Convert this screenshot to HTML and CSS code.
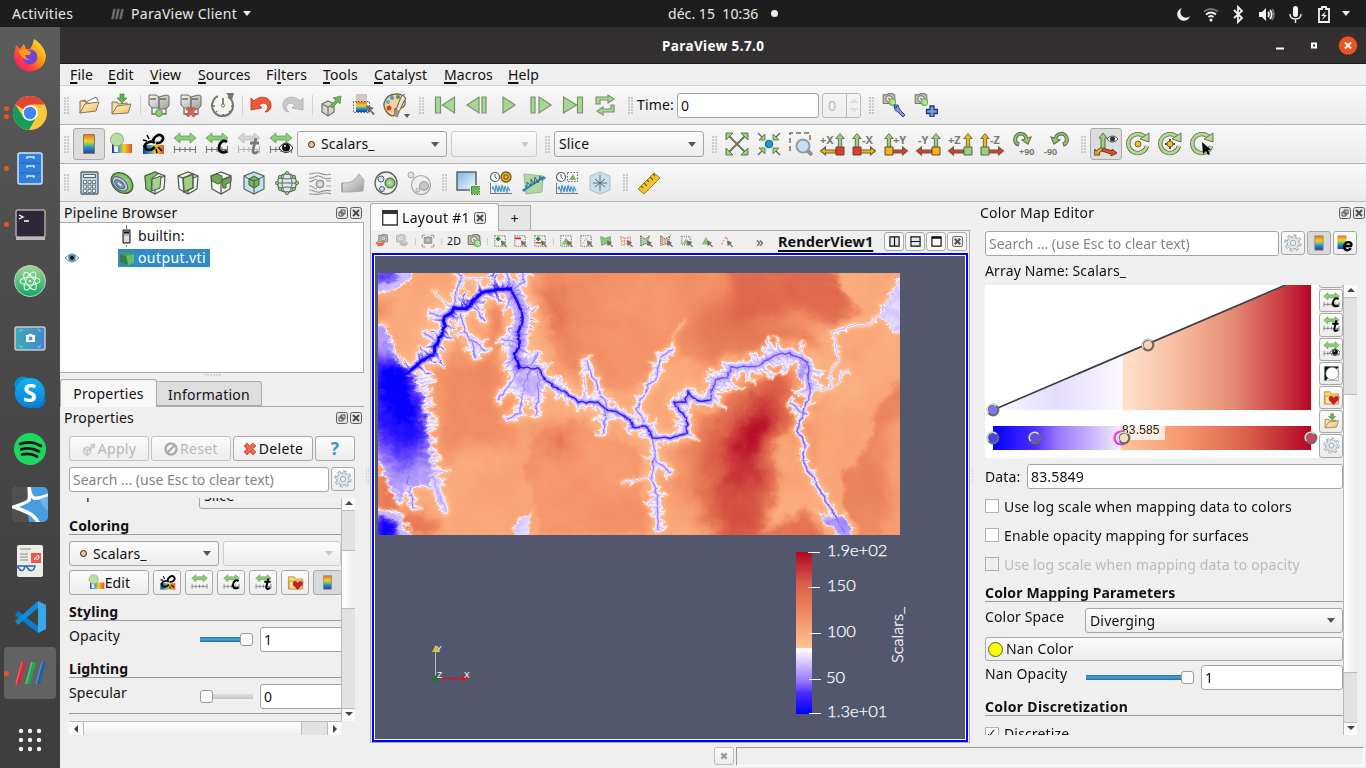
FILE: index.html
```html
<!DOCTYPE html>
<html lang="en">
<head>
<meta charset="utf-8">
<title>ParaView 5.7.0</title>
<link rel="stylesheet" href="styles.css">
</head>
<body>
<svg class="defs" width="0" height="0">
<defs>
<linearGradient id="rainbow" x1="0" y1="0" x2="0" y2="1"><stop offset="0" stop-color="#e2683c"/><stop offset=".15" stop-color="#f59a1c"/><stop offset=".35" stop-color="#f5cf20"/><stop offset=".5" stop-color="#8cc46c"/><stop offset=".65" stop-color="#2d9cc4"/><stop offset=".85" stop-color="#1c62b4"/><stop offset="1" stop-color="#3a3a94"/></linearGradient>
<linearGradient id="rainbowh"><stop offset="0" stop-color="#24388c"/><stop offset=".3" stop-color="#2a9ad0"/><stop offset=".6" stop-color="#f5cf20"/><stop offset="1" stop-color="#e2502c"/></linearGradient>
<linearGradient id="ylw" x1="0" y1="0" x2="1" y2="1"><stop offset="0" stop-color="#fff4cc"/><stop offset="1" stop-color="#f0be64"/></linearGradient>
<linearGradient id="blu" x1="0" y1="0" x2="1" y2="1"><stop offset="0" stop-color="#7db8e2"/><stop offset="1" stop-color="#f2f8fd"/></linearGradient>
<radialGradient id="grn"><stop offset="0" stop-color="#c8e8b0"/><stop offset="1" stop-color="#6fb457"/></radialGradient>
<linearGradient id="gry" x1="0" y1="0" x2="1" y2="1"><stop offset="0" stop-color="#f4f4f4"/><stop offset="1" stop-color="#9d9d9d"/></linearGradient>
<linearGradient id="ff" x1="1" y1="0" x2="0.1" y2="1"><stop offset="0" stop-color="#fff044"/><stop offset=".45" stop-color="#ff980e"/><stop offset=".75" stop-color="#ff3647"/><stop offset="1" stop-color="#e31587"/></linearGradient>
<linearGradient id="atm" x1="0" y1="0" x2="0" y2="1"><stop offset="0" stop-color="#a4d890"/><stop offset="1" stop-color="#10a768"/></linearGradient>
<linearGradient id="shot"><stop offset="0" stop-color="#3daab4"/><stop offset="1" stop-color="#4388d0"/></linearGradient>
<linearGradient id="sky" x1="0" y1="0" x2="0" y2="1"><stop offset="0" stop-color="#10b4f0"/><stop offset="1" stop-color="#0b7ed8"/></linearGradient>
<linearGradient id="opfill"><stop offset="0" stop-color="#fff"/><stop offset=".1" stop-color="#efeaff"/><stop offset=".2" stop-color="#e4dcfd"/><stop offset=".405" stop-color="#fbf8ff"/><stop offset=".41" stop-color="#ffe2cd"/><stop offset=".6" stop-color="#f6b797"/><stop offset=".75" stop-color="#e58d75"/><stop offset=".9" stop-color="#cb4143"/><stop offset="1" stop-color="#b40426"/></linearGradient>
<linearGradient id="barh"><stop offset="0" stop-color="#00f"/><stop offset=".13" stop-color="#4c2cff"/><stop offset=".2" stop-color="#9674f8"/><stop offset=".4" stop-color="#f3ecff"/><stop offset=".408" stop-color="#ffc397"/><stop offset=".6" stop-color="#f6976b"/><stop offset=".8" stop-color="#d9604a"/><stop offset="1" stop-color="#b40426"/></linearGradient>

<symbol id="folder" viewBox="0 0 24 24"><path d="M3 20 5 8l3-1 1 2 10-5 2 4" fill="#fff" stroke="#76765c"/><path d="M3 20V8h5l1 2h3" fill="#f6dfa8" stroke="#84755a"/><path d="m3 20 5-9 14-2-3 9z" fill="url(#ylw)" stroke="#84755a"/></symbol>
<symbol id="save" viewBox="0 0 24 24"><path d="M3 21V9h5l1 2 9-1 1 3" fill="#f6dfa8" stroke="#84755a"/><path d="m3 21 5-8 14-2-3 9z" fill="url(#ylw)" stroke="#84755a"/><path d="M11 1h4v4h3l-5 5-5-5h3z" fill="#62ae4c" stroke="#4f8b3b" stroke-width=".7"/></symbol>
<symbol id="srv" viewBox="0 0 24 24"><path d="m2 2 7 0 3 2v11H5l-3-3zM12 4l7-2 3 1v10l-3 3h-7z" fill="url(#gry)" stroke="#6e6e62"/><path d="M3 6h6M13 6h6M5 15v6h4M19 15v6h-4" fill="none" stroke="#6e6e62" stroke-width="1.3"/></symbol>
<symbol id="connect" viewBox="0 0 24 24"><use href="#srv"/><circle cx="12" cy="20" r="3.500" fill="#8bcf72" stroke="#5e9450"/></symbol>
<symbol id="disconnect" viewBox="0 0 24 24"><use href="#srv"/><path d="m8 15 8 8M16 15l-8 8" stroke="#9d4235" stroke-width="3.6"/><path d="m8 15 8 8M16 15l-8 8" stroke="#e06655" stroke-width="2.2"/></symbol>
<symbol id="clock" viewBox="0 0 24 24"><path d="M17 3.700A10.500 10.500 0 1 1 7 3.200" fill="#f5f5f0" stroke="#73736a" stroke-width="2"/><path d="m15 0 8 0-2 7z" fill="#73736a"/><path d="M12 12V5M2 13h2M20 13h2M12 21v2M5 19l1-1M19 19l-1-1" stroke="#73736a" stroke-width="1.7"/><circle cx="12" cy="12.500" r="1.600" fill="#fff" stroke="#73736a"/></symbol>
<symbol id="undo" viewBox="0 0 24 24"><path d="m2 5 3 3c6-7 18-4 17 5-.3 4-3 6-6 6 6-5 1-12-6-7l3 3-11 2z" fill="#ee5834" stroke="#a8402b" stroke-width=".8"/></symbol>
<symbol id="redo" viewBox="0 0 24 24"><path d="m22 5-3 3C13 1 1 4 2 13c.3 4 3 6 6 6-6-5-1-12 6-7l-3 3 11 2z" fill="#c9c9c9" stroke="#aaa" stroke-width=".8"/></symbol>
<symbol id="extract" viewBox="0 0 24 24"><path d="m3 11 6-3 6 3v8l-6 4-6-4z" fill="#d6d6cf" stroke="#76766a" stroke-width="1.300"/><path d="m3 11 6 3 6-3M9 14v9" fill="none" stroke="#76766a" stroke-width="1.200"/><path d="m11 13 6-6-3-2 8-2-1 8-2-2-6 6z" fill="#6db75a" stroke="#598c4a" stroke-width=".8"/></symbol>
<symbol id="pickmap" viewBox="0 0 24 24"><path d="M5 1h11v8H5z" fill="#d6c4bd"/><path d="M5 9h11v10H5z" fill="url(#rainbow)"/><path d="M2.500 8.500v11h16v-11z" fill="none" stroke="#555" stroke-dasharray="1.500 1.500"/><path d="m15 12 2 8 2-2 3 4 2-1-4-4 3-2z" fill="#6b6b61"/></symbol>
<symbol id="palette" viewBox="0 0 24 24"><path d="M12 1C3 2-2 11 3 18s11 6 9 0 9 1 10-7S18 0 12 1z" fill="#f4d29c" stroke="#66604c" stroke-width="1.3"/><circle cx="9" cy="5" r="2" fill="#4a9bcd"/><circle cx="15" cy="4" r="2" fill="#5c9244"/><circle cx="5" cy="9" r="2" fill="#45b1d7"/><circle cx="6" cy="15" r="2.500" fill="#d94226"/><path d="m21 1-3 3-7 18 3 2 6-14 3-5-2-1z" fill="#e6e3d5" stroke="#625e51"/><path d="m13 16-2 6 3 2 3-6z" fill="#a7957a"/></symbol>
<symbol id="first" viewBox="0 0 24 24"><path d="M2.500 4h5v16h-5zM21.500 4v16l-12-8z"/></symbol>
<symbol id="prev" viewBox="0 0 24 24"><path d="M17 4h4v16h-4zM14 4v16L2 12z"/></symbol>
<symbol id="play" viewBox="0 0 24 24"><path d="m6 4 12 8-12 8z"/></symbol>
<symbol id="next" viewBox="0 0 24 24"><path d="M2 4h4v16H2zM10 4l12 8-12 8z"/></symbol>
<symbol id="last" viewBox="0 0 24 24"><path d="m2.500 4 13 8-13 8zM16.500 4h5v16h-5z"/></symbol>
<symbol id="loop" viewBox="0 0 24 24"><path d="M3 11V4h12V2l6 4-6 4V7H7v4zM21 12v7H10v3l-6-4 6-4v2h8v-4z"/></symbol>
<symbol id="cam" viewBox="0 0 24 24"><path d="M2 3h8v-2h9v2h3v15H2z" fill="#bdbdb1" stroke="#66665a" stroke-width="1.5"/><circle cx="12" cy="10" r="5.500" fill="#e9e9e4" stroke="#66665a" stroke-width="1.500"/><circle cx="12" cy="10" r="2" fill="#98988c"/></symbol>
<symbol id="camgreen" viewBox="0 0 24 24"><use href="#cam"/><circle cx="18" cy="16" r="6" fill="#83ca62" stroke="#579c3f"/><circle cx="18" cy="15" r="2.500" fill="none" stroke="#fff" stroke-width="1.500"/><path d="m20 17 2 3" stroke="#fff" stroke-width="1.500"/></symbol>
<symbol id="camwrench" viewBox="0 0 24 24"><svg x="0" y="0" width="14" height="14"><use href="#camgreen"/></svg><path d="m12 12 4 0 1 3 2 3 4 4-2 2-5-5-3-2-1-4 2 2 1-1z" fill="#7d98d8" stroke="#253c86" stroke-width=".9"/></symbol>
<symbol id="camplus" viewBox="0 0 24 24"><svg x="0" y="0" width="14" height="14"><use href="#camgreen"/></svg><path d="M16 13h4v3.500h3.500v4H20V24h-4v-3.500h-3.500v-4H16z" fill="#7399e0" stroke="#22367c" stroke-width="1.300"/></symbol>

<symbol id="bar" viewBox="0 0 24 24"><path d="M6.500 2.500h11v19h-11z" fill="url(#rainbow)" stroke="#8a7a68"/></symbol>
<symbol id="editmap" viewBox="0 0 24 24"><path d="M3 12h20v9H3z" fill="url(#rainbowh)"/><path d="M5 11h4v9H5z" fill="#eee"/><circle cx="8" cy="7.500" r="6.500" fill="#b9dda5" stroke="#8db37f"/></symbol>
<symbol id="sepmap" viewBox="0 0 24 24"><path d="M2 13h21v9H2z" fill="url(#rainbowh)"/><path d="M14 11c-4-3-11 0-10 4s6 4 10 0M12 10c0-5 6-9 9-6s-1 8-6 7" fill="none" stroke="#050505" stroke-width="2.700"/><path d="m6 3 2 4M2 8l4 1M17 15l4 4M15 17l1 4" fill="none" stroke="#050505" stroke-width="1.500"/></symbol>
<symbol id="arr" viewBox="0 0 24 24"><path d="m1 6 6-5v3h10V1l6 5-6 5V8H7v3z" fill="#8cce74" stroke="#5a8d4e" stroke-width=".7"/></symbol>
<symbol id="ticks" viewBox="0 0 24 24"><path d="M1.500 14v7M1 17.500h22M6.800 15v5M12 15v5M17 15v5M22.500 14v7" stroke="#77776d" stroke-width="1.100"/></symbol>
<symbol id="resc" viewBox="0 0 24 24"><use href="#arr"/><use href="#ticks"/></symbol>
<symbol id="rescc" viewBox="0 0 24 24"><use href="#arr"/><use href="#ticks"/><path d="M22 10c-4-3-8 1-8 6s5 5 8 3" fill="none" stroke="#050505" stroke-width="2.800"/></symbol>
<symbol id="resct" viewBox="0 0 24 24"><use href="#arr"/><use href="#ticks"/><path d="m19 6-3 12c-.5 4 3 4 5 1M13 11h9" fill="none" stroke="#050505" stroke-width="2.800"/></symbol>
<symbol id="rescv" viewBox="0 0 24 24"><use href="#arr"/><use href="#ticks"/><path d="M10 16c5-7 10-6 14 0-4 6-10 6-14 0" fill="#efefef" stroke="#222"/><circle cx="17" cy="15.500" r="4" fill="#111"/><circle cx="16" cy="14" r="1" fill="#fff"/></symbol>
<symbol id="reset" viewBox="0 0 24 24"><path d="m3 3 18 18M21 3 3 21" stroke="#6d7159" stroke-width="1.800"/><path d="M1 1h7L1 8zM23 1h-7l7 7zM1 23h7l-7-7zM23 23h-7l7-7z" fill="#9bd083" stroke="#5b784c"/></symbol>
<symbol id="zoomdata" viewBox="0 0 24 24"><path d="m1 1 6 6M23 1l-6 6M1 23l6-6M23 23l-6-6" stroke="#686d58" stroke-width="1.500"/><path d="M2 8h6V2zM22 8h-6V2zM2 16h6v6zM22 16h-6v6z" fill="#9bd083" stroke="#5b784c" stroke-width=".9"/><circle cx="12" cy="12" r="3.800" fill="#2293cf" stroke="#176187"/></symbol>
<symbol id="zoombox" viewBox="0 0 24 24"><path d="M1 19V1h20v8" fill="none" stroke="#70705f" stroke-width="1.500" stroke-dasharray="5 3"/><path d="m18 18 5 5" stroke="#939393" stroke-width="4"/><circle cx="14" cy="14" r="6.500" fill="#c4e0f3" stroke="#989898" stroke-width="2"/></symbol>
<symbol id="au" viewBox="0 0 12 20"><path d="m6 1 5 6H8v12H4V7H1z" stroke="#6a7050" stroke-width="1.200"/></symbol>
<symbol id="sl" viewBox="0 0 17 10"><path d="m1 5 5-4v3h10v3H6v2z" stroke="#685b3c" stroke-width="1.100"/></symbol>
<symbol id="rotp" viewBox="0 0 24 24"><path d="M9 18a7 7 0 1 1 9.500-8l3.500-1-3 7-6-4 3-1A4.200 4.200 0 1 0 10 15z" fill="#93cc7e" stroke="#65794d" stroke-width="1.200"/></symbol>
<symbol id="axes" viewBox="0 0 24 24"><path d="m8 15-6 4-1-2-1 6 6 0-1-2 6-4z" fill="#e4a331" stroke="#714e28"/><path d="m9 16 9 3 0-2 5 4-6 3v-2l-9-3z" fill="#db4d31" stroke="#763527"/><path d="m9 1 4 5h-2v10H7V6H5z" fill="#9bd083" stroke="#527044"/><path d="M13 7c3-4 8-4 11 0-3 4-8 4-11 0" fill="#efefef" stroke="#555"/><circle cx="18.500" cy="7" r="2.500" fill="#333"/></symbol>
<symbol id="rot" viewBox="0 0 24 24"><path d="M19.500 6A9.500 9.500 0 1 0 21 14" fill="none" stroke="#68725a" stroke-width="4.400"/><path d="M19.500 6A9.500 9.500 0 1 0 21 14" fill="none" stroke="#b5da8b" stroke-width="2.600"/><path d="m14 7 9 3V1z" fill="#b5da8b" stroke="#68725a"/></symbol>
<symbol id="rc1" viewBox="0 0 24 24"><use href="#rot"/><circle cx="12" cy="12" r="3" fill="#eec122" stroke="#73632d"/></symbol>
<symbol id="rc2" viewBox="0 0 24 24"><use href="#rot"/><path d="M12 7v10M7 12h10" stroke="#4b4b3b" stroke-width="2"/><circle cx="12" cy="12" r="3" fill="#eec122" stroke="#73632d"/></symbol>
<symbol id="rc3" viewBox="0 0 24 24"><use href="#rot"/><path d="m12 10 1 12 3-3 2 4 2-1-2-4h3z" fill="#070707"/></symbol>

<symbol id="calc" viewBox="0 0 24 24"><rect x="4" y="1" width="17" height="22" rx="1" fill="#bcd7ea" stroke="#53626b" stroke-width="1.300"/><path d="M6.500 3.500h12v3h-12z" fill="#eee" stroke="#53626b"/><path d="M6.500 9.500h3v3h-3zM11 9.500h3v3h-3zM15.500 9.500h3v3h-3zM6.500 14h3v3h-3zM11 14h3v3h-3zM15.500 14h3v3h-3zM6.500 18.500h3v3h-3zM11 18.500h3v3h-3zM15.500 18.500h3v3h-3z" fill="#fff" stroke="#60707a" stroke-width=".9"/></symbol>
<symbol id="contour" viewBox="0 0 24 24"><g transform="rotate(40 12 12)"><ellipse cx="12" cy="12" rx="12" ry="9" fill="url(#grn)" stroke="#48623b" stroke-width="1.300"/><ellipse cx="11" cy="14" rx="9" ry="5.500" fill="#b9cfe0" stroke="#4e6074"/><ellipse cx="11" cy="14.500" rx="6" ry="3" fill="#7394b5" stroke="#42566b"/><ellipse cx="11" cy="14.500" rx="2.500" ry="1" fill="#dbe8f0"/></g></symbol>
<symbol id="cube" viewBox="0 0 24 24"><path d="m12 1 10 4-1 13-9 5-9-5L2 5z" fill="#f2f2f0"/><path d="m2 5 10 4 10-4M12 9v14M12 1 2 5l1 13 9 5 9-5 1-13z" fill="none" stroke="#4c5745" stroke-width="1.200"/></symbol>
<symbol id="clip" viewBox="0 0 24 24"><use href="#cube"/><path d="m2 5 10-4 3 2-6 4-1 14-5-3z" fill="#85bd71" stroke="#45603a"/><path d="m9 8 9-3-1 12-8 3z" fill="#a5d291" stroke="#45603a"/></symbol>
<symbol id="slice" viewBox="0 0 24 24"><use href="#cube"/><path d="m7 7 10-4v14L8 21z" fill="#9ece88" stroke="#45603a" stroke-width="1.500"/></symbol>
<symbol id="thresh" viewBox="0 0 24 24"><use href="#cube"/><path d="m2 5 6-2 5 2v6l-4 2-6-3zM13 9l9-3v5l-5 2v4h-3z" fill="#6ca957" stroke="#45603a"/></symbol>
<symbol id="subset" viewBox="0 0 24 24"><path d="m12 1 10 4v13l-10 5-10-5V5z" fill="#c8e1ee" stroke="#53646b" stroke-width="1.200"/><path d="m7 8 5-3 5 3v6l-5 3-5-3z" fill="#78b463" stroke="#3e6133"/><path d="m7 8 5 2 5-2M12 10v7l0 6M2 5l5 3M22 5l-5 3" fill="none" stroke="#3f5b3a"/></symbol>
<symbol id="glyph" viewBox="0 0 24 24"><circle cx="12" cy="12" r="9.500" fill="#d9e9f1" stroke="#4e5c5a" stroke-width="1.200"/><ellipse cx="12" cy="12" rx="5" ry="10" fill="none" stroke="#5a6960"/><path d="M1 12h22M4 6q8 4 16 0M4 18q8-4 16 0" fill="none" stroke="#5a6960"/><g fill="#8fc37a" stroke="#456337" stroke-width=".7"><circle cx="12" cy="2" r="1.700"/><circle cx="12" cy="22" r="1.700"/><circle cx="2" cy="12" r="1.700"/><circle cx="22" cy="12" r="1.700"/><circle cx="5" cy="6" r="1.700"/><circle cx="19" cy="6" r="1.700"/><circle cx="5" cy="18" r="1.700"/><circle cx="19" cy="18" r="1.700"/></g></symbol>
<symbol id="stream" viewBox="0 0 24 24"><path d="M1 3c5 0 7-2 10-1s7 3 12 1M1 7c5 1 6-3 10-2s6 4 12 2M1 11c4 0 4-3 8-3M1 15c3-1 5 3 8 3M18 10h5M18 15h5M1 19c5 0 7 3 11 2s7-3 11-1M1 23c5 0 7 1 11 0s7-2 11 0" fill="none" stroke="#969696" stroke-width="1.200"/><circle cx="12" cy="13" r="4" fill="#c9c9c9" stroke="#898989"/><circle cx="12" cy="13" r="1.500" fill="#f0f0f0"/></symbol>
<symbol id="warp" viewBox="0 0 24 24"><path d="M1 12q12 1 17-9l5 6-1 11q-10 1-21 1z" fill="url(#gry)" stroke="#aaa"/><path d="M1 12v9" stroke="#888"/></symbol>
<symbol id="group" viewBox="0 0 24 24"><circle cx="12" cy="12" r="11" fill="#eef0ee" stroke="#5c6454" stroke-width="1.300"/><circle cx="7" cy="8" r="3" fill="#d3e0e7" stroke="#50636e"/><circle cx="16" cy="12" r="5" fill="url(#grn)" stroke="#45603a"/><circle cx="8" cy="18" r="2.500" fill="#c9dce6" stroke="#50636e"/></symbol>
<symbol id="extlvl" viewBox="0 0 24 24"><circle cx="14" cy="14" r="9.500" fill="#efefef" stroke="#a9a9a9" stroke-width="1.200"/><circle cx="4" cy="4" r="3" fill="#e0e0e0" stroke="#a9a9a9"/><circle cx="17" cy="15" r="4.500" fill="#c4c4c4" stroke="#999"/><circle cx="11" cy="19" r="2" fill="#ddd" stroke="#aaa"/></symbol>
<symbol id="selx" viewBox="0 0 24 24"><path d="M1 1h19v18H1z" fill="url(#blu)" stroke="#56666f" stroke-width="1.500"/><path d="M14.500 14.500h9v9h-9z" fill="#6aba51" stroke="#f2f2f2"/><path d="M15.500 15.500h8v8h-8z" fill="none" stroke="#397a2b" stroke-dasharray="1.500 1"/></symbol>
<symbol id="wave" viewBox="0 0 24 24"><path d="M1.500 12v10.500H23" fill="none" stroke="#777"/><path d="m3 18 1-2 2 5 1-7 2 7 1-6 2 6 1-7 2 7 1-6 2 6 1-5 2 4" fill="none" stroke="#4695d2" stroke-width="1.200"/></symbol>
<symbol id="pltime" viewBox="0 0 24 24"><use href="#wave"/><circle cx="6" cy="6" r="4.500" fill="#fff" stroke="#54645f" stroke-width="1.200"/><path d="M6 3v3l2 2" fill="none" stroke="#555"/><circle cx="17" cy="6" r="5" fill="#eab52d" stroke="#70571d" stroke-width="1.300"/><path d="M15 4h4v4h-4z" fill="none" stroke="#70571d"/></symbol>
<symbol id="plline" viewBox="0 0 24 24"><path d="m2 3 19 2-1 16-16 2z" fill="#b1d6a2" stroke="#97b78c"/><path d="m2 19 20-13" stroke="#1477ae" stroke-width="1.500"/><path d="m3 15 2 1 0-5 4 4 0-7 3 5 1-7 3 6 2-7 3 5" fill="none" stroke="#356685"/><circle cx="2" cy="19" r="1.600" fill="#1e86c3"/><circle cx="22" cy="7" r="1.600" fill="#1e86c3"/></symbol>
<symbol id="plsel" viewBox="0 0 24 24"><use href="#wave"/><circle cx="6" cy="6" r="4.500" fill="#fff" stroke="#54645f" stroke-width="1.200"/><path d="M6 3v3l2 2" fill="none" stroke="#555"/><path d="M12.500 1.500h10v9h-10z" fill="none" stroke="#59645f" stroke-dasharray="1.500 1.500"/><path d="m14 9 4-6 3 6z" fill="#70b55c"/></symbol>
<symbol id="freeze" viewBox="0 0 24 24"><path d="m12 1 10 4v14l-10 4-10-4V5z" fill="#cadce8" stroke="#aebec8"/><path d="M12 4v16M5 12h14M7 8l10 8M17 8 7 16" stroke="#547083" stroke-width="1"/></symbol>
<symbol id="ruler" viewBox="0 0 24 24"><path d="m1 18 16-16 6 5L7 23z" fill="#f1c62b" stroke="#a67c25"/><path d="m4 15 2 2M7 12l3 3M10 9l2 2M13 6l3 3M16 3l2 2" stroke="#765820" stroke-width="1.200"/></symbol>

<symbol id="gear" viewBox="0 0 24 24"><circle cx="12" cy="12" r="9.300" fill="none" stroke="#7b8894" stroke-width="4" stroke-dasharray="3.700 3.600"/><circle cx="12" cy="12" r="8.200" fill="#e0e7ec" stroke="#7b8894"/><circle cx="12" cy="12" r="9" fill="none" stroke="#e0e7ec" stroke-width="3" stroke-dasharray="3 4.070"/><circle cx="12" cy="12" r="3.500" fill="#fff" stroke="#7b8894"/></symbol>
<symbol id="heart" viewBox="0 0 24 24"><path d="M2 21V4h8l2 3h10v14z" fill="#f8d869" stroke="#b67f29"/><path d="m3 10 20 0-2 11H3z" fill="#fbe99f" stroke="#b67f29"/><path d="m15 22-6-6c-2-7 4-7 6-3 3-4 9-3 6 3z" fill="#ca1b22" stroke="#8f1118" stroke-width=".7"/></symbol>
<symbol id="ebar" viewBox="0 0 24 24"><path d="M2 2h12v18H2z" fill="url(#rainbow)"/><path d="M11 16h9c3-5-6-8-9-1-2 6 4 9 9 4" fill="none" stroke="#050505" stroke-width="3.200"/></symbol>
<symbol id="invert" viewBox="0 0 24 24"><path d="M2 2h20v20H2z" fill="#111"/><path d="M22 3v19H4z" fill="#fff"/><circle cx="13" cy="12" r="9" fill="#fff" stroke="#777"/></symbol>
<symbol id="flt" viewBox="0 0 12 12"><rect x=".5" y=".5" width="11" height="11" rx="2" fill="#e7e7e7" stroke="#5c5c5c"/><path d="M5 3h4v4H5zM3 5h4v4H3z" fill="#e7e7e7" stroke="#4d4d4d"/></symbol>
<symbol id="cls" viewBox="0 0 12 12"><rect x=".5" y=".5" width="11" height="11" rx="2" fill="#e7e7e7" stroke="#5c5c5c"/><path d="m3 3 6 6M9 3 3 9" stroke="#4d4d4d" stroke-width="2"/></symbol>
<symbol id="knob" viewBox="-8 -8 16 16"><circle r="5.300" fill="rgba(255,255,255,.2)" stroke="#6b6b60" stroke-width="2.200"/><path d="M-4.500 3A5.300 5.300 0 0 1 3.500-4" fill="none" stroke="#d8d8cc" stroke-width="1.600"/></symbol>

<symbol id="selcur" viewBox="0 0 16 16"><path d="m9 7 1 7 2-2 3 3 1-1-3-3 2-1z" fill="#6f6e62"/></symbol>
<symbol id="dash" viewBox="0 0 16 16"><path d="M2 2h12v12H2z" fill="none" stroke="#555b50" stroke-dasharray="1.300 1.300"/></symbol>
<symbol id="selA" viewBox="0 0 16 16"><use href="#dash"/><path d="M6 3v5M3.500 5.500h5" stroke="#238431" stroke-width="2"/><use href="#selcur"/></symbol>
<symbol id="selB" viewBox="0 0 16 16"><use href="#dash"/><path d="M2 5h7" stroke="#e31e1e" stroke-width="2"/><use href="#selcur"/></symbol>
<symbol id="selC" viewBox="0 0 16 16"><use href="#dash"/><path d="M6 3v5M3.500 5.500h5" stroke="#238431" stroke-width="2"/><path d="M3 10h6" stroke="#e31e1e" stroke-width="1.500"/><use href="#selcur"/></symbol>
<symbol id="selD" viewBox="0 0 16 16"><use href="#dash"/><path d="m3 12 5-8 5 8z" fill="#88bf70"/><use href="#selcur"/></symbol>
<symbol id="selE" viewBox="0 0 16 16"><use href="#dash"/><path d="m4 11 4-6 4 6" fill="none" stroke="#ee7a5e" stroke-dasharray="2 1.500"/><use href="#selcur"/></symbol>
<symbol id="selF" viewBox="0 0 16 16"><path d="m2 3 5 2 6-2v9l-5-1-5 2z" fill="#8ec47b" stroke="#7d9b6d"/><use href="#selcur"/></symbol>
<symbol id="selG" viewBox="0 0 16 16"><path d="m2 3 5 2 6-2v9l-5-1-5 2zM6 4v9M10 4v8M3 8h11" fill="none" stroke="#e6614b" stroke-dasharray="1.500 1"/><use href="#selcur"/></symbol>
<symbol id="selH" viewBox="0 0 16 16"><path d="m2 2 5 4 5-4-2 5 3 6-6-2-5 3z" fill="#b3caa8" stroke="#333f2c" stroke-dasharray="1.500 1"/><use href="#selcur"/></symbol>
<symbol id="selI" viewBox="0 0 16 16"><path d="m2 2 5 4 6-4-2 5 3 6-6-2-6 2z" fill="#eccdc0" stroke="#353535" stroke-dasharray="1.500 1"/><path d="M4 5v6M7 6v5M10 6v5" stroke="#ee5c44" stroke-dasharray="1.500 1"/><use href="#selcur"/></symbol>
<symbol id="selJ" viewBox="0 0 16 16"><path d="M3 3h10v9H3z" fill="none" stroke="#7d817b" stroke-width="2" stroke-dasharray="1 1.500"/><path d="m4 11 4-6 4 6z" fill="#9cb78f"/><use href="#selcur"/></symbol>
<symbol id="selK" viewBox="0 0 16 16"><path d="m3 12 5-9 5 9z" fill="#8ac374"/><use href="#selcur"/></symbol>
<symbol id="selL" viewBox="0 0 16 16"><path d="m3 12 5-9 5 9" fill="none" stroke="#ee7256" stroke-width="1.300" stroke-dasharray="2 2"/><use href="#selcur"/></symbol>
</defs>
</svg>

<header class="topbar">
  <span class="activities">Activities</span>
  <svg class="pvmini" viewBox="0 0 14 12"><path d="M3 1h2L3 11H1zM7 1h2L7 11H5zM11 1h2l-2 10H9z" fill="#7c7c7c" stroke="#555" stroke-width=".7"/></svg>
  <span class="appname">ParaView Client</span><i class="caret light"></i>
  <span class="clocktxt">déc. 15&nbsp; 10:36</span><i class="dot"></i>
  <svg class="tray" viewBox="0 0 172 20" fill="none" stroke="#f2f2f2" stroke-width="1.800">
    <path d="M10 4a6.500 6.500 0 1 0 8 8 5.500 5.500 0 0 1-8-8z" fill="#f2f2f2" stroke="none"/>
    <path d="M32 7.500q7-5 14 0" stroke="#777"/><path d="M34 10.500q5-4 10 0M36.500 13q2.500-2 5 0"/><circle cx="39" cy="16" r="1.500" fill="#f2f2f2" stroke="none"/>
    <path d="m62 6 8 8-4 4V3l4 4-8 7"/>
    <path d="M87 8h3l4-4v13l-4-4h-3z" fill="#f2f2f2" stroke="none"/><path d="M96 8q2 2 0 5M98 6q3.500 4 0 9"/><path d="M100 5q4 5 0 11" stroke="#777"/>
    <rect x="121" y="2" width="5" height="11" rx="2.500" fill="#f2f2f2" stroke="none"/><path d="M118 10q0 5 5.500 5t5.500-5M123.500 15v4" stroke-width="1.400"/>
    <path d="M147 5h3V3h4v2h3v13h-10z"/><path d="m154 7-5 5h3l-2 4 5-5h-3z" fill="#f2f2f2" stroke="none"/>
  </svg><i class="caret light last"></i>
</header>

<div class="shell">
<nav class="dock">
  <div class="app"><svg viewBox="0 0 36 36"><path d="M22 1c6 4 11 9 12 17A16 16 0 1 1 3 12l1-5 4 4 4-5 2 5 4 0q3-4 4-10z" fill="url(#ff)"/><circle cx="18" cy="19" r="7.500" fill="#7542d8"/><path d="M7 13q5-4 12 1l-1 3h-5q1 4 5 5-8 1-11-9z" fill="#ff9a1c"/></svg></div>
  <div class="app"><b class="run two"></b><svg viewBox="0 0 36 36"><circle cx="18" cy="19" r="17" fill="#fbc93a"/><path d="M18 19 3.300 10.500A17 17 0 0 1 32.700 10.500H18z" fill="#e24436"/><path d="M3.300 10.500A17 17 0 0 0 17 36l7.500-13-13 0z" fill="#169c59"/><circle cx="18" cy="19" r="7.800" fill="#fff"/><circle cx="18" cy="19" r="6.200" fill="#4285f4"/></svg></div>
  <div class="app"><b class="run"></b><svg viewBox="0 0 36 36"><rect x="6" y="3" width="24" height="31" rx="2" fill="#2f80de" stroke="#d5e4f4" stroke-width="1.500"/><path d="M7 13h22M7 23h22" stroke="#1f63b8"/><path d="M15 9V7h7v2M15 18v-2h7v2M15 28v-2h7v2" fill="none" stroke="#dce8f6" stroke-width="1.300"/></svg></div>
  <div class="app"><b class="run"></b><svg viewBox="0 0 36 36"><rect x="4" y="4" width="29" height="27" rx="2" fill="#2d2738" stroke="#aaa9a6" stroke-width="1.500"/><path d="M4 31h29v3H4z" fill="#bbb"/><path d="m7 9 4 2-4 2M12 15h5" fill="none" stroke="#fff" stroke-width="1.300"/></svg></div>
  <div class="app"><svg viewBox="0 0 36 36"><circle cx="18" cy="19" r="15.500" fill="url(#atm)" stroke="#c6ccc7"/><g fill="none" stroke="#e8fff2" stroke-width="1"><ellipse cx="18" cy="19" rx="4" ry="10" transform="rotate(28 18 19)"/><ellipse cx="18" cy="19" rx="4" ry="10" transform="rotate(-32 18 19)"/><ellipse cx="18" cy="19" rx="4" ry="10" transform="rotate(88 18 19)"/></g><circle cx="18" cy="19" r="1.300" fill="#fff"/></svg></div>
  <div class="app"><svg viewBox="0 0 36 36"><rect x="3" y="9" width="30" height="23" rx="2" fill="url(#shot)" stroke="#cbc7cc" stroke-width="1.500"/><path d="m8 14 0-2h3M25 12h3v2M8 27v2h3M25 29h3v-2" fill="none" stroke="#8bc4df"/><path d="M14 17h2l1-1h3l1 1h2v7h-9z" fill="#fff"/><circle cx="18.500" cy="20.500" r="2" fill="#4a98cc"/></svg></div>
  <div class="app"><svg viewBox="0 0 36 36"><circle cx="11" cy="11" r="8.500" fill="#078fcf"/><circle cx="25" cy="26" r="8.500" fill="#0878c8"/><circle cx="18" cy="19" r="15" fill="url(#sky)"/></svg><em>S</em></div>
  <div class="app"><svg viewBox="0 0 36 36"><circle cx="18" cy="19" r="16" fill="#1ed760"/><path d="M8 14q11-4 21 2M9 19.500q9-3 18 2M10 24.500q8-2 15 2" fill="none" stroke="#181818" stroke-width="2.700" stroke-linecap="round"/></svg></div>
  <div class="app"><svg viewBox="0 0 36 36"><defs><clipPath id="rnd"><rect y="1" width="36" height="35" rx="5"/></clipPath></defs><g clip-path="url(#rnd)"><path d="M0 0h36v36H0z" fill="#479de0"/><path d="M0 0h17l4 12L2 21l14 8 1 7H0z" fill="#505050"/><path d="M17-1q1 12 5 13t15-3M17 0q1 12 0 14T2 21q14 5 18 8t7 9" fill="none" stroke="#fff" stroke-width="3.500"/><path d="M28 13q2 8 9 13v-16z" fill="#6ab3ea"/></g></svg></div>
  <div class="app"><svg viewBox="0 0 36 36"><rect x="5" y="3" width="26" height="32" rx="2" fill="#ececea"/><path d="M8 7h11M8 12h8M8 15h8M8 18h8" stroke="#aaa" stroke-width="1.300"/><rect x="19" y="11" width="10" height="10" fill="#ef5749"/><path d="M22 18q5-7 5-3t-5 1" stroke="#fff" fill="none"/><path d="M5 24h8q-1 6-5 4zM14 24h9q-1 6-6 4z" fill="none" stroke="#2865ab" stroke-width="1.500"/></svg></div>
  <div class="app"><svg viewBox="0 0 36 36"><path d="M26 3v32L3 17l3-4 20 15" fill="#087dce"/><path d="M26 10 6 27l-3-4L26 3z" fill="#1489d4"/><path d="m26 3 8 4v24l-8 4z" fill="#3ba8ee"/></svg></div>
  <div class="app active"><b class="run"></b><svg viewBox="0 0 36 36"><path d="M9 7h5l-6 22H3z" fill="#d62637"/><path d="M19 7h5l-6 22h-5z" fill="#25a34b"/><path d="M29 7h5l-6 22h-5z" fill="#1e62a8"/><path d="M10 7 4 29M20 7l-6 22M30 7l-6 22" stroke="#ffffff44" stroke-width="1.500"/></svg></div>
  <div class="app grid"><svg viewBox="0 0 36 36" fill="#f4f4f4"><circle cx="9" cy="9" r="2.200"/><circle cx="18" cy="9" r="2.200"/><circle cx="27" cy="9" r="2.200"/><circle cx="9" cy="18" r="2.200"/><circle cx="18" cy="18" r="2.200"/><circle cx="27" cy="18" r="2.200"/><circle cx="9" cy="27" r="2.200"/><circle cx="18" cy="27" r="2.200"/><circle cx="27" cy="27" r="2.200"/></svg></div>
</nav>

<div class="window">
  <div class="titlebar"><span>ParaView 5.7.0</span>
    <svg class="wm" viewBox="0 0 100 36"><path d="M16 20.500h8" stroke="#fff" stroke-width="2"/><path d="M52 15.500h4v4h-4z" fill="none" stroke="#fff" stroke-width="2"/><circle cx="88" cy="17.500" r="9.300" fill="#e95420"/><path d="m85 14.500 6 6M91 14.500l-6 6" stroke="#fff" stroke-width="2"/></svg>
  </div>
  <div class="menubar"><span><u>F</u>ile</span><span><u>E</u>dit</span><span><u>V</u>iew</span><span><u>S</u>ources</span><span>Fi<u>l</u>ters</span><span><u>T</u>ools</span><span><u>C</u>atalyst</span><span><u>M</u>acros</span><span><u>H</u>elp</span></div>

  <div class="toolbar">
    <i class="grip s"></i>
    <span class="tb"><svg><use href="#folder"/></svg></span><span class="tb"><svg><use href="#save"/></svg></span><i class="sep"></i>
    <span class="tb"><svg><use href="#connect"/></svg></span><span class="tb"><svg><use href="#disconnect"/></svg></span><span class="tb"><svg><use href="#clock"/></svg></span><i class="sep"></i>
    <span class="tb"><svg><use href="#undo"/></svg></span><span class="tb"><svg><use href="#redo"/></svg></span><i class="sep"></i>
    <span class="tb"><svg><use href="#extract"/></svg></span><span class="tb"><svg><use href="#pickmap"/></svg></span><span class="tb pal"><svg><use href="#palette"/></svg><i class="caret tiny"></i></span>
    <i class="grip g18"></i>
    <span class="tb vcr"><svg><use href="#first"/></svg></span><span class="tb vcr"><svg><use href="#prev"/></svg></span><span class="tb vcr"><svg><use href="#play"/></svg></span><span class="tb vcr"><svg><use href="#next"/></svg></span><span class="tb vcr"><svg><use href="#last"/></svg></span><span class="tb vcr"><svg><use href="#loop"/></svg></span>
    <i class="grip g16"></i><span class="timelbl">Time:</span><span class="field time">0</span>
    <span class="spin"><span>0</span><i></i></span><i class="grip g17"></i>
    <span class="tb"><svg><use href="#camwrench"/></svg></span><span class="tb"><svg><use href="#camplus"/></svg></span>
  </div>
  <div class="toolbar">
    <i class="grip s"></i>
    <span class="tb on"><svg><use href="#bar"/></svg></span><span class="tb"><svg><use href="#editmap"/></svg></span><span class="tb"><svg><use href="#sepmap"/></svg></span><span class="tb"><svg><use href="#resc"/></svg></span><span class="tb"><svg><use href="#rescc"/></svg></span><span class="tb dim"><svg><use href="#resct"/></svg></span><span class="tb"><svg><use href="#rescv"/></svg></span>
    <span class="combo w150 sc"><i class="pt"></i>Scalars_</span><span class="combo w86 off"></span>
    <i class="grip g17"></i><span class="combo w150">Slice</span><i class="grip g17"></i>
    <span class="tb"><svg><use href="#reset"/></svg></span><span class="tb"><svg><use href="#zoomdata"/></svg></span><span class="tb"><svg><use href="#zoombox"/></svg></span>
    <span class="tb ax"><svg viewBox="0 0 28 26"><text x="1" y="13">+X</text><use href="#au" x="16" y="0" width="10" height="20" fill="#9bd083"/><use href="#sl" x="0" y="15" width="18" height="10" fill="#f3b415"/><path d="M17 16h8v8h-8z" fill="#df3d2a" stroke="#6d4330"/></svg></span>
    <span class="tb ax l"><svg viewBox="0 0 28 26"><text x="14" y="13">-X</text><use href="#au" x="4" y="0" width="10" height="20" fill="#9bd083"/><g transform="matrix(-1 0 0 1 29 0)"><use href="#sl" x="0" y="15" width="18" height="10" fill="#f3b415"/></g><path d="M5 16h8v8H5z" fill="#df3d2a" stroke="#6d4330"/></svg></span>
    <span class="tb ax l"><svg viewBox="0 0 28 26"><text x="13" y="13">+Y</text><use href="#au" x="4" y="0" width="10" height="20" fill="#9bd083"/><g transform="matrix(-1 0 0 1 29 0)"><use href="#sl" x="0" y="15" width="18" height="10" fill="#df3d2a"/></g><path d="M5 16h8v8H5z" fill="#f3b415" stroke="#6d4330"/></svg></span>
    <span class="tb ax"><svg viewBox="0 0 28 26"><text x="3" y="13">-Y</text><use href="#au" x="16" y="0" width="10" height="20" fill="#9bd083"/><use href="#sl" x="0" y="15" width="18" height="10" fill="#df3d2a"/><path d="M17 16h8v8h-8z" fill="#f3b415" stroke="#6d4330"/></svg></span>
    <span class="tb ax"><svg viewBox="0 0 28 26"><text x="1" y="13">+Z</text><use href="#au" x="16" y="0" width="10" height="20" fill="#f3b415"/><use href="#sl" x="0" y="15" width="18" height="10" fill="#df3d2a"/><path d="M17 16h8v8h-8z" fill="#9bd083" stroke="#52683c"/></svg></span>
    <span class="tb ax l"><svg viewBox="0 0 28 26"><text x="14" y="13">-Z</text><use href="#au" x="4" y="0" width="10" height="20" fill="#f3b415"/><g transform="matrix(-1 0 0 1 29 0)"><use href="#sl" x="0" y="15" width="18" height="10" fill="#df3d2a"/></g><path d="M5 16h8v8H5z" fill="#9bd083" stroke="#52683c"/></svg></span>
    <span class="tb ax"><svg viewBox="0 0 28 26"><use href="#rotp" x="-2" y="-3" width="24" height="24"/><text class="sm" x="8" y="24">+90</text></svg></span>
    <span class="tb ax"><svg viewBox="0 0 28 26"><g transform="matrix(-1 0 0 1 28 0)"><use href="#rotp" x="-2" y="-3" width="24" height="24"/></g><text class="sm" x="1" y="24">-90</text></svg></span>
    <i class="grip g17"></i>
    <span class="tb on"><svg><use href="#axes"/></svg></span><span class="tb"><svg><use href="#rc1"/></svg></span><span class="tb"><svg><use href="#rc2"/></svg></span><span class="tb"><svg><use href="#rc3"/></svg></span>
  </div>
  <div class="toolbar wide">
    <i class="grip s"></i>
    <span class="tb"><svg><use href="#calc"/></svg></span><span class="tb"><svg><use href="#contour"/></svg></span><span class="tb"><svg><use href="#clip"/></svg></span><span class="tb"><svg><use href="#slice"/></svg></span><span class="tb"><svg><use href="#thresh"/></svg></span><span class="tb"><svg><use href="#subset"/></svg></span><span class="tb"><svg><use href="#glyph"/></svg></span><span class="tb"><svg><use href="#stream"/></svg></span><span class="tb"><svg><use href="#warp"/></svg></span><span class="tb"><svg><use href="#group"/></svg></span><span class="tb"><svg><use href="#extlvl"/></svg></span>
    <i class="grip g16"></i>
    <span class="tb"><svg><use href="#selx"/></svg></span><span class="tb"><svg><use href="#pltime"/></svg></span><span class="tb"><svg><use href="#plline"/></svg></span><span class="tb"><svg><use href="#plsel"/></svg></span><span class="tb"><svg><use href="#freeze"/></svg></span>
    <i class="grip g16"></i><span class="tb"><svg><use href="#ruler"/></svg></span>
  </div>

  <div class="main">
    <section class="left">
      <div class="dtitle"><span>Pipeline Browser</span><svg><use href="#flt"/></svg><svg><use href="#cls"/></svg></div>
      <div class="tree">
        <div class="node"><svg class="srvico" viewBox="0 0 9 22"><path d="M4.500 0v4M4.500 20v2" stroke="#777"/><path d="M1 5h7v13H1z" fill="#b9b9b9" stroke="#111"/><path d="M2 7.500h5" stroke="#111" stroke-width="2"/><path d="M2 11h5v6H2z" fill="#ddd"/></svg><span>builtin:</span></div>
        <div class="node"><svg class="eye" viewBox="0 0 16 12"><path d="M1 6q7-8 14 0-7 8-14 0z" fill="#e9f1f5" stroke="#777" stroke-width=".8"/><circle cx="8" cy="5.700" r="3.800" fill="#4292bd"/><circle cx="8" cy="5.700" r="2" fill="#071520"/></svg><span class="sel"><svg viewBox="0 0 16 16"><path d="m1 4 7-2 7 2v9l-6 2-8-3z" fill="#4f9e57"/><path d="m7 6 8-2v9l-6 2z" fill="#66bb6c"/><path d="m1 4 6 2 2 9-8-3z" fill="#3d7a48"/></svg>output.vti</span></div>
      </div>
      <div class="hsplit"></div>
      <div class="tabs"><span class="tab act">Properties</span><span class="tab">Information</span></div>
      <div class="dtitle t2"><span>Properties</span><svg><use href="#flt"/></svg><svg><use href="#cls"/></svg></div>
      <div class="btns">
        <span class="btn off"><svg class="dimg"><use href="#extract"/></svg>Apply</span>
        <span class="btn off"><svg viewBox="0 0 24 24"><circle cx="12" cy="12" r="9.500" fill="none" stroke="#aaa" stroke-width="4"/><path d="m6 18 12-12" stroke="#aaa" stroke-width="4"/></svg>Reset</span>
        <span class="btn"><svg viewBox="0 0 24 24"><path d="m4 4 16 16M20 4 4 20" stroke="#b33620" stroke-width="7.500"/><path d="m4.500 4.500 15 15M19.500 4.500l-15 15" stroke="#ef674d" stroke-width="5"/></svg>Delete</span>
        <span class="btn help">?</span>
      </div>
      <div class="search"><span class="field ph">Search ... (use Esc to clear text)</span><span class="btn sq"><svg><use href="#gear"/></svg></span></div>
      <div class="pane">
        <div class="scroller">
          <div class="cliprow"><span class="rep">Representation</span><span class="combo">Slice</span></div>
          <h3>Coloring</h3>
          <div class="prow"><span class="combo w150 sc"><i class="pt"></i>Scalars_</span><span class="combo off rest"></span></div>
          <div class="prow small"><span class="btn edit"><svg><use href="#editmap"/></svg>Edit</span><span class="btn ib"><svg><use href="#sepmap"/></svg></span><span class="btn ib"><svg><use href="#resc"/></svg></span><span class="btn ib"><svg><use href="#rescc"/></svg></span><span class="btn ib"><svg><use href="#resct"/></svg></span><span class="btn ib"><svg><use href="#heart"/></svg></span><span class="btn ib dn"><svg><use href="#bar"/></svg></span></div>
          <h3>Styling</h3>
          <div class="prow sld"><label>Opacity</label><span class="slider full"><i></i></span><span class="field">1</span></div>
          <h3>Lighting</h3>
          <div class="prow sld"><label>Specular</label><span class="slider"><i></i></span><span class="field">0</span></div>
          <h3 class="tail"></h3>
        </div>
        <div class="vbar"><i class="up"></i><b></b><i class="down"></i></div>
        <div class="hbar"><i class="lt"></i><b></b><i class="rt"></i></div>
      </div>
    </section>
    <div class="vsplit"></div>

    <section class="center">
      <div class="ltabs"><span class="ltab"><svg class="win" viewBox="0 0 16 16"><path d="M.7 1h14.600v14H.7z" fill="#fff" stroke="#333" stroke-width="1.300"/><path d="M0 0h16v4H0z" fill="#333"/></svg>Layout #1<svg class="x"><use href="#cls"/></svg></span><span class="ptab">+</span></div>
      <div class="frame">
        <div class="vtool">
          <span><svg viewBox="0 0 24 24"><use href="#cam" x="5" y="0" width="18" height="18"/><path d="m1 15 5-3-1 3c5 0 9 0 10-4 4 6-2 11-9 9l1 3z" fill="#df6a48"/></svg></span>
          <span><svg viewBox="0 0 24 24" class="faint"><use href="#cam" x="1" y="0" width="18" height="18"/><path d="m23 15-5-3 1 3c-5 0-9 0-10-4-4 6 2 11 9 9l-1 3z" fill="#888"/></svg></span><i class="vs"></i>
          <span><svg viewBox="0 0 24 24"><path d="M2 7V2h5M17 2h5v5M2 17v5h5M17 22h5v-5" fill="none" stroke="#888877" stroke-width="1.500"/><use href="#cam" x="4" y="4" width="16" height="16"/></svg></span><i class="vs"></i>
          <span class="twod">2D</span><span><svg><use href="#camgreen"/></svg></span><i class="vs"></i>
          <span><svg><use href="#selA"/></svg></span><span><svg><use href="#selB"/></svg></span><span><svg><use href="#selC"/></svg></span><i class="vs"></i>
          <span><svg><use href="#selD"/></svg></span><span><svg><use href="#selE"/></svg></span><span><svg><use href="#selF"/></svg></span><span><svg><use href="#selG"/></svg></span><span><svg><use href="#selH"/></svg></span><span><svg><use href="#selI"/></svg></span><span><svg><use href="#selJ"/></svg></span><span><svg><use href="#selK"/></svg></span><span><svg><use href="#selL"/></svg></span>
          <span class="more">»</span><span class="rv">RenderView1</span>
          <span class="vb"><svg viewBox="0 0 12 12"><path d="M1 1h10v10H1zM6 1v10" fill="#e3e8f8" stroke="#111" stroke-width="1.300"/></svg></span><span class="vb"><svg viewBox="0 0 12 12"><path d="M1 1h10v10H1zM1 6h10" fill="#e3e8f8" stroke="#111" stroke-width="1.300"/></svg></span><span class="vb"><svg viewBox="0 0 12 12"><path d="M1 1h10v10H1z" fill="#fff" stroke="#111" stroke-width="1.300"/><path d="M1 2h10" stroke="#111" stroke-width="2"/></svg></span><span class="vb"><svg><use href="#cls"/></svg></span>
        </div>
        <div class="view">
          <canvas id="terrain" width="522" height="262"></canvas>
          <svg class="axes3d" viewBox="0 0 45 45"><path d="M9.500 36V6" stroke="#b9bac6"/><path d="M9 35.500h28" stroke="#c51c1c" stroke-width="1.500"/><path d="m6 9 3.500-7 3.500 7z" fill="#d5c628"/><path d="m36 32 7 3.500-7 3z" fill="#c51c1c"/><circle cx="9.500" cy="35.500" r="3" fill="#167a29"/><text x="10" y="9">Y</text><text x="38" y="35">X</text><text x="11" y="35">Z</text></svg>
          <div class="legend">
            <div class="lbar"></div>
            <svg viewBox="0 0 112 181"><path d="M0 10.500h12M0 45.500h12M1 91.500h12M1 137.500h12M1 171.500h12" stroke="#fff"/><text x="19" y="14">1.9e+02</text><text x="19" y="49">150</text><text x="19" y="95">100</text><text x="18" y="141">50</text><text x="19" y="175">1.3e+01</text><text transform="translate(95 121) rotate(-90)" class="nm">Scalars_</text></svg>
          </div>
        </div>
      </div>
    </section>
    <div class="vsplit r"></div>

    <section class="right">
      <div class="dtitle"><span>Color Map Editor</span><svg><use href="#flt"/></svg><svg><use href="#cls"/></svg></div>
      <div class="search"><span class="field ph">Search ... (use Esc to clear text)</span><span class="btn sq"><svg><use href="#gear"/></svg></span><span class="btn sq dn"><svg><use href="#bar"/></svg></span><span class="btn sq"><svg><use href="#ebar"/></svg></span></div>
      <div class="array">Array Name: Scalars_</div>
      <div class="rpane">
        <div class="rscroll">
          <div class="plotrow">
            <svg class="plot" viewBox="0 0 334 173"><path d="M8 125 326-10V125z" fill="url(#opfill)"/><path d="M8 125 310-4" stroke="#3c3c46" stroke-width="1.700"/><path d="M8 141h318v24H8z" fill="url(#barh)"/><circle cx="136" cy="153" r="6.500" fill="none" stroke="#f22ee8" stroke-width="2.200"/><path d="M140 141h40v14h-40z" fill="#fff" fill-opacity=".75"/><text x="137" y="149">83.585</text><circle cx="8" cy="125" r="5" fill="#55f"/><circle cx="8" cy="153" r="5" fill="#11f"/><circle cx="50" cy="153" r="5" fill="#3c1cf5"/><circle cx="139" cy="153" r="5" fill="#fcd3b5"/><circle cx="163" cy="60" r="5" fill="#fac3a0"/><circle cx="326" cy="153" r="5" fill="#c2183a"/><use href="#knob" x="0" y="117" width="16" height="16"/><use href="#knob" x="155" y="52" width="16" height="16"/><use href="#knob" x="0" y="145" width="16" height="16"/><use href="#knob" x="42" y="145" width="16" height="16"/><use href="#knob" x="131" y="145" width="16" height="16"/><use href="#knob" x="318" y="145" width="16" height="16"/></svg>
            <div class="vbtns"><span class="btn"></span><span class="btn"><svg><use href="#rescc"/></svg></span><span class="btn"><svg><use href="#resct"/></svg></span><span class="btn"><svg><use href="#rescv"/></svg></span><span class="btn"><svg><use href="#invert"/></svg></span><span class="btn"><svg><use href="#heart"/></svg></span><span class="btn"><svg><use href="#save"/></svg></span><span class="btn"><svg><use href="#gear"/></svg></span></div>
          </div>
          <div class="datarow"><span>Data:</span><span class="field">83.5849</span></div>
          <div class="chk"><i></i>Use log scale when mapping data to colors</div>
          <div class="chk"><i></i>Enable opacity mapping for surfaces</div>
          <div class="chk off"><i></i>Use log scale when mapping data to opacity</div>
          <h3 class="h22">Color Mapping Parameters</h3>
          <div class="csrow"><label>Color Space</label><span class="combo">Diverging</span></div>
          <div class="btn nan"><i></i>Nan Color</div>
          <div class="norow"><label>Nan Opacity</label><span class="slider full"><i></i></span><span class="field">1</span></div>
          <h3 class="wider">Color Discretization</h3>
          <div class="chk last"><i>✓</i>Discretize</div>
        </div>
        <div class="vbar"><i class="up"></i><b></b><i class="down"></i></div>
      </div>
    </section>
  </div>
  <footer class="status"><span class="btn stop"><svg viewBox="0 0 12 12"><path d="m2 2 8 8M10 2l-8 8" stroke="#999" stroke-width="3.500"/></svg></span><span class="progress"></span></footer>
</div>
</div>
<script src="terrain.js"></script>
</body>
</html>
```
FILE: styles.css
```css
* { box-sizing: border-box; }
html, body { margin: 0; }
body { width: 1366px; height: 768px; overflow: hidden; background: #efefef; color: #111; font: 14px/18px "Noto Sans", "Open Sans", sans-serif; letter-spacing: .15px; white-space: nowrap; }
svg { display: block; flex: none; }
i, em { font-style: normal; }
.defs { position: absolute; }

/* desktop bar */
.topbar { height: 27px; background: #1d1d1d; color: #e8e8e8; display: flex; align-items: center; padding-left: 12px; }
.activities { width: 98px; letter-spacing: .3px; }
.pvmini { width: 15px; height: 12px; margin-right: 6px; }
.appname { width: 112px; letter-spacing: .3px; }
.caret { width: 0; height: 0; border: 4.500px solid transparent; border-top: 5px solid #555; border-bottom: 0; flex: none; }
.caret.light { border-top-color: #eee; }
.caret.light.last { margin-left: -2px; }
.clocktxt { margin-left: 417px; width: 103px; letter-spacing: .05px; }
.dot { width: 7px; height: 7px; border-radius: 50%; background: #eee; }
.tray { width: 172px; height: 20px; margin-left: 394px; }

.shell { display: flex; height: 741px; }
.dock { width: 60px; background: linear-gradient(#5c5c5c, #4b4b4b 35%, #3d3d3d); padding-top: 3px; display: flex; flex-direction: column; align-items: center; }
.app { width: 52px; height: 52px; flex: none; margin-bottom: 4px; border-radius: 4px; display: flex; align-items: center; justify-content: center; position: relative; }
.app svg { width: 36px; height: 36px; }
.app.active { background: #626262; margin-top: 1px; }
.app.grid { margin-top: 11px; }
.app em { position: absolute; color: #fff; font: bold 25px "Noto Sans"; top: 9px; }
.run { position: absolute; left: 0; width: 5px; height: 5px; border-radius: 50%; background: #e95420; top: 24px; }
.run.two { top: 20px; box-shadow: 0 8px #e95420; }
.window { width: 1306px; height: 741px; background: #efefef; display: flex; flex-direction: column; }
.titlebar { height: 37px; flex: none; background: #333031; border-bottom: 1px solid #1d1b1c; color: #fff; font-weight: bold; font-size: 13.500px; display: flex; align-items: center; padding-left: 602px; letter-spacing: .4px; padding-top: 1px; }
.titlebar span { flex: 1; }
.wm { width: 100px; height: 36px; margin-right: 6px; }
.menubar { height: 22px; flex: none; background: #efefef; border-bottom: 1px solid #d2d2d2; padding-left: 10px; display: grid; grid-template-columns: 38px 42px 48px 68px 57px 51px 70px 64px auto; align-items: center; }
.menubar u { text-underline-offset: 2px; text-decoration-thickness: 2px; text-decoration-skip-ink: none; }

/* toolbars */
.toolbar { height: 39px; flex: none; display: flex; align-items: center; background: linear-gradient(#f8f8f8, #ebebeb); border-bottom: 1px solid #b0b0b0; }
.toolbar.wide { height: 38px; border-bottom-color: #b5b5b5; }
.tb { width: 32px; height: 32px; flex: none; display: flex; align-items: center; justify-content: center; position: relative; }
.wide .tb { width: 33px; }
.tb svg { width: 24px; height: 24px; }
.tb.ax svg { width: 28px; height: 26px; }
.tb.ax.l { padding-right: 6px; }
.ax text { font: bold 11px "Noto Sans"; fill: #7b7b74; letter-spacing: 0; }
.ax text.sm { font-size: 9px; }
.tb.on { background: #dcdcdc; border: 1px solid #aaa; border-radius: 3px; }
.tb.dim { filter: grayscale(1); opacity: .5; }
.vcr svg { fill: #a5d795; stroke: #7c9169; stroke-width: 1.200; overflow: visible; }
.caret.tiny { position: absolute; right: 1px; bottom: 3px; border-width: 4px 3px 0; }
.sep { width: 6px; height: 20px; background: linear-gradient(#d3d3d3, #d3d3d3) center/1px 100% no-repeat; flex: none; }
.grip { height: 17px; flex: none; background: radial-gradient(circle at 1px 1px, #bbb .6px, transparent 1px) 0 0/3px 3px; background-clip: content-box; background-origin: content-box; }
.grip.s { width: 13px; padding: 0 3px 0 4px; }
.wide .grip.s { width: 12px; padding-right: 2px; }
.g18 { width: 18px; padding: 0 4px 0 8px; }
.g17 { width: 17px; padding: 0 3px 0 8px; }
.g16 { width: 16px; padding: 0 3px 0 7px; }
.field { background: #fff; border: 1px solid #a5a5a5; border-radius: 3px; height: 25px; line-height: 23px; padding-left: 3px; overflow: hidden; flex: none; }
.time { width: 142px; }
.timelbl { width: 40px; }
.spin { width: 39px; height: 25px; margin-left: 3px; border: 1px solid #b9b9b9; border-radius: 3px; color: #bbb; display: flex; }
.spin span { width: 25px; padding-left: 5px; line-height: 23px; border-right: 1px solid #bbb; }
.spin i { margin: 5px 2px; width: 9px; background: linear-gradient(to bottom right, transparent 50%, #ddd 0) 0 0/4.500px 4px no-repeat, linear-gradient(to bottom left, transparent 50%, #ddd 0) 4.500px 0/4.500px 4px no-repeat, linear-gradient(to top right, transparent 50%, #ddd 0) 0 9px/4.500px 4px no-repeat, linear-gradient(to top left, transparent 50%, #ddd 0) 4.500px 9px/4.500px 4px no-repeat; }
.combo { height: 26px; border: 1px solid #a5a5a5; border-radius: 3px; background: linear-gradient(#fcfcfc, #ececec); padding-left: 4px; line-height: 24px; display: flex; align-items: center; flex: none; }
.combo::after { content: ""; margin-left: auto; margin-right: 7px; border: 4.500px solid transparent; border-top: 5px solid #555; border-bottom: 0; }
.combo.off { border-color: #ccc; }
.combo.off::after { border-top-color: #ccc; }
.w150 { width: 150px; }
.w86 { width: 86px; margin-left: 4px; }
.pt { width: 7px; height: 7px; border: 1.500px solid #222; border-radius: 50%; background: #fb8; margin: 0 6px 0 6px; }

/* docks */
.main { height: 543px; flex: none; display: flex; }
.left { width: 304px; display: flex; flex-direction: column; }
.dtitle { height: 21px; flex: none; display: flex; align-items: center; padding: 0 2px 0 4px; gap: 2px; }
.dtitle span { flex: 1; letter-spacing: .2px; }
.dtitle svg { width: 12px; height: 12px; }
.tree { height: 151px; background: #fff; border: 1px solid #a9a9a9; border-left: 0; padding-top: 2px; margin-top: -1px; }
.node { height: 22px; display: flex; align-items: center; }
.srvico { width: 9px; height: 22px; margin: 0 7px 0 62px; }
.eye { width: 16px; height: 12px; margin: 0 38px 0 4px; }
.sel { width: 92px; height: 18px; background: #308cc6; color: #fff; display: flex; align-items: center; gap: 3px; padding-left: 1px; line-height: 17px; margin-top: -1px; letter-spacing: .4px; }
.sel svg { width: 16px; height: 16px; }
.hsplit { background: radial-gradient(circle at 1px 1px, #bbb .5px, transparent .9px) 0 0/3px 3px; width: 18px; height: 3px; margin: 1px 0 2px 144px; }
.tabs { height: 28px; display: flex; align-items: flex-end; border-bottom: 1px solid #aaa; width: 304px; }
.tab { width: 105px; height: 25px; border: 1px solid #aaa; border-left: 0; background: #dedede; text-align: center; line-height: 25px; border-radius: 0 3px 0 0; letter-spacing: .25px; }
.tab.act { width: 97px; height: 28px; background: #f7f7f7; border: 1px solid #aaa; border-bottom: 0; margin-bottom: -1px; border-radius: 3px 3px 0 0; line-height: 27px; }
.t2 { padding-bottom: 0; height: 22px; }
.btns { display: flex; gap: 2px; padding: 7px 0 0 9px; }
.btn { border: 1px solid #a8a8a8; border-radius: 3px; background: linear-gradient(#fcfcfc, #ececec); height: 25px; display: flex; align-items: center; justify-content: center; width: 80px; flex: none; }
.btn svg { width: 14px; height: 14px; margin-right: 2px; }
.btns .btn { letter-spacing: .3px; }
.btn.off { color: #b8b8b8; border-color: #c2c2c2; }
.dimg { filter: grayscale(1); opacity: .5; }
.btn.help { width: 40px; color: #3596d4; font-weight: bold; font-size: 17px; }
.search { display: flex; gap: 2px; padding: 6px 0 0 9px; }
.field.ph { width: 260px; color: #858585; letter-spacing: 0; }
.btn.sq { width: 24px; height: 24px; }
.btn.sq svg { width: 18px; height: 18px; margin: 0; }
.btn.dn { background: #d9d9d9; }
.pane { margin: 6px 0 0 9px; width: 286px; height: 237px; display: grid; grid-template: 223px 14px / 272px 14px; }
.scroller { overflow: hidden; }
.cliprow { height: 11px; overflow: hidden; display: flex; align-items: flex-end; }
.cliprow .rep { width: 130px; flex: none; line-height: 20px; margin-bottom: 6px; }
.cliprow .combo { width: 160px; }
h3 { margin: 0; height: 26px; font-size: 14px; line-height: 17px; padding-top: 8px; border-bottom: 1px solid #999; }
h3.wider { letter-spacing: .3px; }
h3.tail { height: 5px; padding: 0; }
.prow { display: flex; margin-top: 6px; height: 25px; align-items: flex-start; }
.prow .combo { height: 25px; }
.combo.rest { width: 118px; margin-left: 4px; }
.prow.small { margin-top: 4px; gap: 4px; }
.prow .ib { width: 28px; }
.prow .ib:last-child { width: 29px; }
.ib svg { width: 17px; height: 17px; margin: 0; }
.edit svg { width: 17px; height: 17px; margin-right: 0; }
.prow.sld label { width: 131px; flex: none; }
.prow .slider { width: 53px; flex: none; }
.slider { height: 25px; display: flex; align-items: center; background: linear-gradient(#e0e0e0, #c4c4c4) center/100% 5px no-repeat; }
.slider i { width: 13px; height: 13px; border: 1px solid #999; border-radius: 3px; background: #fbfbfb; }
.slider.full { justify-content: flex-end; background-image: linear-gradient(#216da0, #4aa3df 40%, #216da0); }
.sld .field { width: 100px; margin-left: 7px; }
.vbar { background: #e2e2e2; border-left: 1px solid #b9b9b9; display: flex; flex-direction: column; }
.vbar i, .hbar i { background: #fafafa; height: 13px; display: flex; align-items: center; justify-content: center; flex: none; }
.vbar i { padding-bottom: 2px; }
.vbar i::after, .hbar i::after { content: ""; border: 4px solid transparent; }
.up::after { border-bottom-color: #444 !important; border-top: 0 !important; }
.down::after { border-top-color: #444 !important; border-bottom: 0 !important; }
.vbar .up { border-bottom: 1px solid #bbb; }
.vbar .down { border-top: 1px solid #bbb; margin-top: auto; }
.vbar b { height: 59px; margin-top: 39px; background: linear-gradient(90deg, #fff, #ededed); border-top: 1px solid #bbb; border-bottom: 1px solid #bbb; }
.hbar { display: flex; background: #e2e2e2; border-top: 1px solid #bbb; }
.hbar i { width: 14px; }
.lt::after { border-right-color: #444 !important; border-left: 0 !important; }
.rt::after { border-left-color: #444 !important; border-right: 0 !important; }
.hbar b { width: 219px; background: linear-gradient(#fff, #ededed); border: solid #bbb; border-width: 0 1px; }
.hbar .rt { margin-left: auto; border-left: 1px solid #bbb; }
.vsplit { width: 6px; flex: none; background: radial-gradient(circle at 1px 1px, #bbb .5px, transparent .9px) 1px 265px/3px 3px; clip-path: inset(265px 1px 260px 2px); }
.vsplit.r { width: 11px; clip-path: inset(265px 7px 260px 2px); }

/* render view */
.center { width: 600px; display: flex; flex-direction: column; flex: none; }
.ltabs { height: 28px; display: flex; align-items: flex-end; padding-top: 1px; }
.ltab { width: 129px; height: 28px; background: #fafafa; border: 1px solid #aaa; border-bottom: 0; border-radius: 3px 3px 0 0; display: flex; align-items: center; padding-left: 11px; margin-bottom: -1px; position: relative; letter-spacing: .3px; }
.win { width: 16px; height: 16px; margin-right: 4px; }
.x { width: 12px; height: 12px; margin-left: 4px; }
.ptab { width: 32px; height: 25px; border: 1px solid #aaa; border-left: 0; border-bottom: 0; background: #e6e6e6; text-align: center; line-height: 25px; }
.frame { height: 513px; border: 1px solid #aaa; padding: 1px; }
.vtool { height: 21px; display: flex; align-items: center; padding-bottom: 3px; }
.vtool > span { width: 20px; display: flex; justify-content: center; flex: none; }
.vtool svg { width: 14px; height: 14px; }
.vs { width: 6px; height: 7px; background: linear-gradient(#ccc, #ccc) center/1px 100% no-repeat; flex: none; }
.vtool .twod { font-size: 10.500px; width: 20px; }
.faint { filter: grayscale(1); opacity: .5; }
.vtool .more { width: 42px; padding-left: 6px; color: #555; font-size: 15px; }
.vtool .rv { width: 106px; font-weight: bold; font-size: 14.500px; letter-spacing: .05px; text-decoration: underline 1.500px; text-underline-offset: 3px; justify-content: flex-start; }
.vtool .vb { width: 20px; height: 19px; margin: 1px 1px 0 0; border: 1px solid #aaa; border-radius: 3px; background: #f7f7f7; align-items: center; }
.vb svg { width: 11px; height: 11px; }
.view { width: 596px; height: 489px; border: 2px solid #00f; outline: 1px solid #fff; outline-offset: -3px; background: #52576e; padding: 18px 0 0 4px; }
#terrain { display: block; width: 522px; height: 262px; }
.axes3d { width: 45px; height: 45px; margin: 108px 0 0 48px; float: left; }
.axes3d text { font: 8.500px "Liberation Sans"; fill: #fff; }
.legend { display: flex; margin: 7px 0 0 418px; }
.lbar { width: 16px; height: 162px; margin-top: 10px; background: linear-gradient(#b40426, #d9604a 20%, #f08a60 38%, #ffc397 59%, #fff 59.500%, #f0eaff 63%, #9674f8 80%, #4c2cff 87%, #2d18ff 92%, #00f); }
.legend svg { width: 112px; height: 181px; margin-left: -4px; overflow: visible; }
.legend text { font: 300 16.500px/20px Lato, sans-serif; fill: #fff; stroke: #fff; stroke-width: .25px; letter-spacing: 0; }

/* colour map editor */
.right { width: 385px; display: flex; flex-direction: column; }
.right .dtitle { padding: 0 1px 0 0; margin-left: -1px; }
.right .search { padding: 8px 0 0 4px; }
.right .field.ph { width: 294px; }
.array { padding: 6px 0 0 4px; height: 29px; }
.rpane { margin-left: 4px; display: flex; height: 450px; }
.rscroll { width: 358px; overflow: hidden; }
.plotrow { display: flex; height: 173px; background: #fff; }
.plot { width: 334px; height: 173px; }
.plot text { font: 12px "Liberation Sans"; fill: #222; }
.vbtns { width: 24px; background: #efefef; overflow: hidden; display: flex; flex-direction: column; gap: 1px; }
.vbtns .btn { width: 24px; height: 23.200px; }
.vbtns .btn:first-child { margin-top: -20px; }
.vbtns svg { width: 17px; height: 17px; margin: 0; }
.datarow { display: flex; align-items: center; margin-top: 6px; margin-bottom: 3px; }
.datarow span:first-child { width: 42px; }
.datarow .field { width: 316px; }
.chk { height: 29px; display: flex; align-items: center; }
.chk i { width: 14px; height: 14px; border: 1px solid #b0b0b0; background: #fff; margin-right: 5px; font: bold 13px/12px "DejaVu Sans"; letter-spacing: 0; margin-bottom: 1px; }
.chk.off { color: #bbb; }
.chk.off i { background: #efefef; }
.h22 { height: 23px; padding-top: 5px; }
.csrow { display: flex; margin-top: 6px; height: 29px; }
.csrow label, .norow label { width: 101px; }
.csrow label { width: 100px; }
.csrow .combo { width: 258px; height: 25px; }
.nan { width: 358px; height: 24px; justify-content: flex-start; }
.nan i { width: 15px; height: 15px; border-radius: 50%; background: #ff0; border: 1px solid #555; margin: 0 3px 0 2px; }
.norow { display: flex; margin-top: 4px; }
.norow .slider { width: 108px; }
.norow .field { width: 142px; margin-left: 7px; }
.chk.last { height: 36px; }
.right .vbar { width: 14px; }
.right .vbar b { height: 279px; margin-top: 96px; }
.status { height: 24px; display: flex; padding: 2px 2px 0 654px; }
.stop { width: 20px; height: 18px; border-color: #bbb; }
.stop svg { width: 8px; height: 8px; margin: 0; }
.progress { width: 628px; height: 19px; margin-left: 2px; border: 1px solid #999; border-right-color: #fff; border-bottom-color: #fff; }
```
FILE: terrain.js
```js
(function () {
  var W = 522, H = 262, seed = 7;
  function rnd() { seed = (seed * 16807) % 2147483647; return seed / 2147483647; }
  function hash(x, y) { var n = Math.sin(x * 127.1 + y * 311.7) * 43758.5453; return n - Math.floor(n); }
  function clamp(v, hi) { return Math.max(0, Math.min(hi, Math.round(v))); }
  function noise(x, y) {
    var i = Math.floor(x), j = Math.floor(y), u = x - i, v = y - j;
    u = u * u * (3 - 2 * u); v = v * v * (3 - 2 * v);
    var a = hash(i, j), b = hash(i + 1, j), c = hash(i, j + 1), d = hash(i + 1, j + 1);
    return a + (b - a) * u + (c - a) * v + (a - b - c + d) * u * v;
  }
  function fbm(x, y) {
    var rx = x * .8 - y * .6, ry = x * .6 + y * .8;
    return noise(rx, ry) * .5 + noise(x * 2.1, y * 2.1) * .25 + noise(rx * 4.3, ry * 4.3) * .15 + noise(x * 8.7, y * 8.7) * .1;
  }
  function layer(bg) {
    var c = document.createElement('canvas'); c.width = W; c.height = H;
    var g = c.getContext('2d'); g.fillStyle = bg; g.fillRect(0, 0, W, H); g.lineCap = g.lineJoin = 'round'; return g;
  }
  function grey(v) { v = Math.round(v * 255); return 'rgb(' + v + ',' + v + ',' + v + ')'; }
  function poly(g, v, blur, pts) {
    g.filter = blur ? 'blur(' + blur + 'px)' : 'none'; g.fillStyle = grey(v); g.beginPath();
    for (var i = 0; i < pts.length; i += 2) g.lineTo(pts[i], pts[i + 1]);
    g.closePath(); g.fill(); g.filter = 'none';
  }

  // plateau elevation
  var base = layer(grey(.53));
  poly(base, .62, 8, [50,100, 125,60, 130,150, 150,170, 90,175, 60,190, 60,140]);
  poly(base, .66, 4, [112,38, 128,24, 128,80, 116,70]);
  poly(base, .59, 2, [155,160, 190,145, 260,175, 270,262, 160,262, 148,200]);
  poly(base, .66, 8, [155,155, 195,145, 205,180, 170,185]);
  poly(base, .74, 4, [174,165, 186,160, 186,172, 176,176]);
  poly(base, .62, 4, [165,-10, 345,-10, 345,80, 300,85, 250,118, 205,112, 196,75, 172,45]);
  poly(base, .6, 10, [225,-10, 300,-10, 290,60, 240,90, 225,50]);
  poly(base, .7, 7, [162,5, 178,12, 208,110, 190,95, 165,45]);
  poly(base, .69, 10, [310,60, 345,20, 370,50, 420,45, 440,80, 330,100]);
  poly(base, .76, 8, [345,-10, 455,-10, 478,25, 480,45, 455,52, 420,42, 385,48, 350,60]);
  poly(base, .52, 2, [445,-10, 530,-10, 530,110, 500,150, 470,120, 455,60, 460,50, 481,40, 473,25]);
  poly(base, .68, 14, [300,170, 330,120, 440,90, 425,165, 400,262, 340,262, 305,215]);
  poly(base, .82, 10, [330,165, 365,120, 405,90, 412,140, 395,170, 388,275, 340,275, 330,220]);
  poly(base, .91, 7, [350,165, 375,135, 392,120, 394,150, 382,180, 370,215, 350,215]);
  poly(base, .99, 5, [368,158, 374,145, 391,143, 384,160, 372,180, 363,180]);
  poly(base, .52, 5, [400,168, 415,155, 420,190, 440,220, 440,265, 390,265, 397,215]);
  poly(base, .65, 2, [522,105, 497,145, 485,180, 465,205, 467,235, 480,262, 530,262, 530,95]);
  poly(base, .57, 7, [505,150, 530,140, 530,270, 510,270]);
  poly(base, .73, 3, [374,270, 400,252, 428,236, 440,245, 446,270]);
  poly(base, .7, 5, [-5,200, 5,198, 22,230, 60,248, 60,262, -5,262]);
  poly(base, .66, 5, [-5,28, 12,32, 8,45, -5,44]);

  // broad lowlands
  var low = layer('#000'); low.globalCompositeOperation = 'lighten';
  poly(low, .72, 4, [-5,-5, 25,-5, 22,8, 6,12, -5,20]);
  poly(low, .45, 1.500, [-5,-5, 36,-5, 32,8, 22,12, 12,16, 0,24]);
  poly(low, .5, 2.500, [-5,50, 8,50, 16,76, 22,95, 40,110, 44,124, 53,160, 57,195, 54,218, 28,214, 24,238, 10,214, 4,196, -5,187]);
  poly(low, .68, 7, [-5,75, 14,85, 32,104, 44,140, 50,185, 22,200, -5,175]);
  poly(low, .86, 7, [-5,92, 15,88, 30,100, 38,125, 46,165, 25,175, -5,150]);
  poly(low, 1, 5, [3,98, 15,94, 28,102, 30,120, 34,145, 24,150, 8,125]);
  poly(low, .92, 6, [-5,239, 16,241, 26,265, -5,275]);
  poly(low, .46, 2, [-5,235, 20,237, 36,265, -5,275]);
  poly(low, .4, 1.500, [134,265, 137,250, 149,240, 155,236, 151,265]);
  poly(low, .4, 1.500, [526,-2, 516,12, 504,34, 500,44, 509,50, 513,64, 517,58, 526,60]);
  poly(low, .52, 2, [436,236, 453,242, 466,240, 476,266, 458,264, 447,249]);
  poly(low, .47, 3, [138,96, 170,98, 161,138, 155,120, 144,140, 142,114, 120,129]);
  poly(low, .52, 2.500, [418,88, 430,88, 431,112, 421,110]);

  // incised valleys
  var cut = layer('#000'); cut.globalCompositeOperation = 'lighten';
  function stroke(g, p, w, v, blur) {
    g.filter = blur ? 'blur(' + blur + 'px)' : 'none'; g.strokeStyle = grey(v); g.lineWidth = w;
    g.beginPath(); for (var i = 0; i < p.length; i++) g.lineTo(p[i][0], p[i][1]); g.stroke(); g.filter = 'none';
  }
  function wiggle(pts, amp) {
    var out = [];
    for (var i = 0; i + 3 < pts.length; i += 2) {
      var dx = pts[i + 2] - pts[i], dy = pts[i + 3] - pts[i + 1], n = Math.max(1, Math.round(Math.hypot(dx, dy) / 4));
      for (var k = 0; k < n; k++) out.push([pts[i] + dx * k / n + (rnd() - .5) * amp, pts[i + 1] + dy * k / n + (rnd() - .5) * amp]);
    }
    out.push([pts[pts.length - 2], pts[pts.length - 1]]); return out;
  }
  // a side valley: pale banks first, then a darker bed that fades with distance
  function twig(x, y, a, len, w, v) {
    var p = [[x, y]], n = Math.ceil(len / 2.500);
    for (var i = 0; i < n; i++) {
      a += (rnd() - .5) * .8; x += Math.cos(a) * 2.500; y += Math.sin(a) * 2.500; p.push([x, y]);
      if (len > 5 && rnd() < .35) twig(x, y, a + (rnd() < .5 ? 1 : -1) * (.5 + rnd() * .5), len * .45, w * .7, v * .9);
    }
    for (i = 1; i < p.length; i++) {
      var f = 1 - i / p.length, s = [p[i - 1], p[i]];
      stroke(cut, s, w * (2 + 3.200 * f), .3 + .08 * f, .8);
      stroke(cut, s, w * (.5 + 1.100 * f), .36 + (v - .36) * f, .4);
    }
  }
  function river(pts, o) {
    var p = wiggle(pts, o.wig === undefined ? 2.500 : o.wig);
    stroke(cut, p, o.halo + o.len * 1.500, .2, 3);
    stroke(cut, p, o.halo, o.hv || .42, 1.600);
    for (var i = 1; i < p.length; i++) {
      var a = Math.atan2(p[i][1] - p[i - 1][1], p[i][0] - p[i - 1][0]);
      for (var s = -1; s < 2; s += 2) if (rnd() < o.dens) twig(p[i][0], p[i][1], a + s * (.9 + rnd() * .9), o.len * (.3 + rnd() * .8), o.tw || 1.300, o.tv || .5);
    }
    stroke(cut, p, o.core + 2, o.cv * .7, 1);
    stroke(cut, p, o.core, o.cv, .5);
  }
  var big = { halo: 8, hv: .5, core: 2.700, cv: .92, dens: .7, len: 13, tw: 1.600, tv: .78 };
  var mid = { halo: 7, core: 1.300, cv: .8, dens: .6, len: 9, tw: 1.200, tv: .52 };
  var soft = { halo: 4.500, core: 1.200, cv: .57, dens: .6, len: 7, tw: 1, tv: .46 };
  var thin = { halo: 2.400, core: 1, cv: .46, dens: .2, len: 4, tw: .7, tv: .4 };
  river([24,104, 29,100, 42,89, 54,82, 59,69, 65,57, 67,44, 77,35, 87,37, 97,27, 104,20, 120,16, 132,16], big);
  river([132,16, 139,27, 144,44, 140,60, 142,70, 137,84, 142,95], { halo: 16, hv: .47, core: 2.200, cv: .88, dens: .7, len: 13, tw: 1.500, tv: .64 });
  river([142,95, 160,95, 169,109, 187,119, 200,129, 220,129, 230,137, 247,142, 257,154, 267,152, 275,164, 292,165, 309,159, 309,147, 299,135, 295,129, 307,129, 310,119, 319,129, 332,127], mid);
  river([332,127, 337,107, 350,104, 354,94, 379,93, 397,82, 412,80, 429,90, 432,115], { halo: 9, hv: .45, core: 1.500, cv: .66, dens: .7, len: 14, tw: 1.200, tv: .52 });
  river([432,115, 430,127, 424,144, 419,157, 425,164, 427,177, 424,187, 434,204, 442,217, 452,234, 459,247, 467,261], { halo: 4, core: 1.400, cv: .62, dens: .25, len: 6, tw: 1 });
  river([432,115, 445,117, 452,114, 454,97, 462,87, 457,74, 455,60, 469,54, 492,50, 502,42, 515,20], thin);
  river([452,114, 460,111, 464,101, 470,98], thin);
  river([267,150, 257,137, 267,120, 280,100, 282,84, 295,77], soft);
  river([295,77, 296,60, 307,47], { halo: .8, hv: .25, core: .7, cv: .3, dens: 0, len: 3 });
  river([275,164, 277,187, 274,204, 280,227, 280,257], soft);
  river([274,204, 260,206, 244,210], thin);
  river([277,187, 292,200], soft);
  river([77,35, 77,20, 84,4, 80,0], soft);
  river([84,6, 105,5], thin);
  river([132,16, 129,2, 125,-2], soft);
  river([137,16, 146,8, 145,0], soft);
  river([82,40, 87,58, 95,70, 97,85], soft);
  river([92,66, 107,78], soft);
  river([97,35, 107,48], soft);
  river([59,69, 46,60], soft);
  river([67,45, 52,40], soft);
  river([74,34, 54,18], thin);
  river([142,95, 130,114, 120,127], soft);
  river([152,98, 144,120, 142,140, 130,146], soft);
  river([160,97, 161,120, 158,142], soft);
  river([230,137, 219,112, 212,100, 208,88], soft);
  river([208,127, 207,108, 203,100], thin);
  river([228,137, 226,160], soft);
  river([142,70, 124,66], soft);
  river([150,94, 160,80], soft);
  river([429,142, 420,136, 412,130], soft);
  for (var y = 106; y < 215; y += 4) twig(42 + (y - 106) * .14, y, (rnd() - .5) * .9, 4 + rnd() * 8, 1.100, .46);
  river([52,200, 60,198, 72,197], thin);
  river([55,205, 60,220, 67,238], { halo: 8, core: 1, cv: .5, dens: .4, len: 5, tw: 1 });
  river([15,165, 27,190, 35,235], { halo: 4, core: 1, cv: .58, dens: .2, len: 5 });
  river([35,165, 35,190, 28,215], { halo: 4, core: 1, cv: .62, dens: .2, len: 5 });

  var stops = [[0, 8, 0, 255], [.13, 72, 42, 252], [.22, 140, 112, 250], [.36, 226, 214, 255], [.405, 250, 244, 252], [.415, 255, 214, 178], [.45, 255, 190, 144], [.6, 244, 148, 104], [.8, 217, 92, 70], [1, 180, 4, 38]];
  function colour(t) {
    t = Math.max(0, Math.min(1, t));
    for (var i = 1; i < stops.length - 1 && stops[i][0] < t; i++) {}
    var a = stops[i - 1], b = stops[i], f = (t - a[0]) / (b[0] - a[0]);
    return [a[1] + (b[1] - a[1]) * f, a[2] + (b[2] - a[2]) * f, a[3] + (b[3] - a[3]) * f];
  }
  var B = base.getImageData(0, 0, W, H).data, C = cut.getImageData(0, 0, W, H).data, L = low.getImageData(0, 0, W, H).data;
  var out = document.getElementById('terrain').getContext('2d'), img = out.createImageData(W, H);
  for (var yy = 0; yy < H; yy++) for (var xx = 0; xx < W; xx++) {
    var q = (yy * W + xx) * 4;
    var wx = clamp(xx + (fbm(xx / 14, yy / 14) - .5) * 18, W - 1);
    var wy = clamp(yy + (fbm(xx / 14 + 40, yy / 14) - .5) * 18, H - 1);
    var b = B[(wy * W + wx) * 4] / 255 + (fbm(xx / 34 + 5, yy / 34) - .5) * .08;
    var n = fbm(xx / 5, yy / 5) - .5;
    var c = C[(yy * W + clamp(xx + n * 3, W - 1)) * 4] / 255;
    var lx = clamp(xx + (fbm(xx / 7 + 9, yy / 4) - .5) * 14, W - 1);
    var ly = clamp(yy + (fbm(xx / 7 + 70, yy / 7) - .5) * 10, H - 1);
    c = Math.max(c, L[(ly * W + lx) * 4] / 255);
    if (c > .02) c += n * .1;
    var t = c < .31 ? b + (.425 - b) * Math.pow(Math.max(0, c) / .31, 1.500) : .41 * (1 - (c - .31) / .62);
    var k = colour(t);
    img.data[q] = k[0]; img.data[q + 1] = k[1]; img.data[q + 2] = k[2]; img.data[q + 3] = 255;
  }
  out.putImageData(img, 0, 0);
})();
```
